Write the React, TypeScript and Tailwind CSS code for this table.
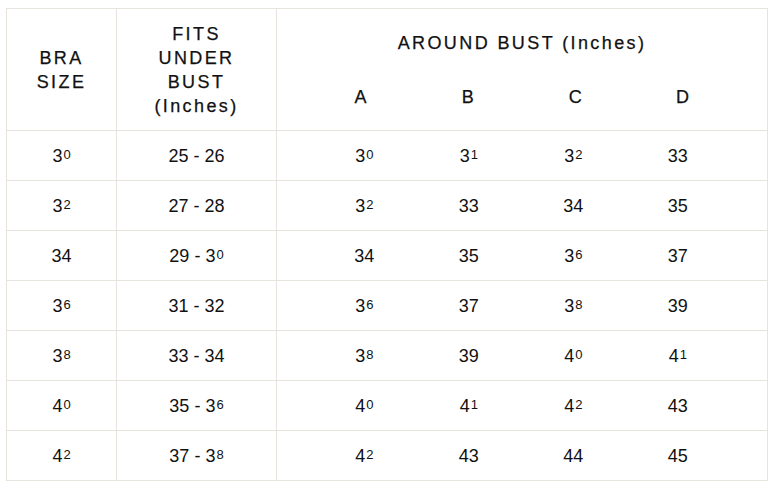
import React from 'react'

// "^" marks a digit that the chart's font draws small and raised
const rows = [
  { size: '3^0', under: '25 - 26', bust: ['3^0', '3^1', '3^2', '33'] },
  { size: '3^2', under: '27 - 28', bust: ['3^2', '33', '34', '35'] },
  { size: '34', under: '29 - 3^0', bust: ['34', '35', '3^6', '37'] },
  { size: '3^6', under: '31 - 32', bust: ['3^6', '37', '3^8', '39'] },
  { size: '3^8', under: '33 - 34', bust: ['3^8', '39', '4^0', '4^1'] },
  { size: '4^0', under: '35 - 3^6', bust: ['4^0', '4^1', '4^2', '43'] },
  { size: '4^2', under: '37 - 3^8', bust: ['4^2', '43', '44', '45'] },
]

const cups = ['A', 'B', 'C', 'D']

function Num({ value }: { value: string }) {
  const parts = value.split('^')
  return (
    <span>
      {parts[0]}
      {parts[1] !== undefined && <span className="ml-px text-[13px] align-[3px]">{parts[1]}</span>}
    </span>
  )
}

export default function App() {
  return (
    <div className="min-h-[489px] w-[776px] bg-white pl-[6px] pt-[8px] text-[#111]">
      <div className="w-[762px] border-l border-t border-[#e6e4dd] font-['Liberation_Sans',Arial,sans-serif]">
        {/* Header */}
        <div className="grid grid-cols-[110px_160px_491px] text-[18px] leading-[24px] tracking-[2.4px] [-webkit-text-stroke:0.25px_#111]">
          <div className="flex h-[122px] items-center justify-center border-b border-r border-[#e6e4dd] text-center">
            BRA
            <br />
            SIZE
          </div>
          <div className="flex h-[122px] items-center justify-center border-b border-r border-[#e6e4dd] text-center">
            FITS
            <br />
            UNDER
            <br />
            BUST
            <br />
            (Inches)
          </div>
          <div className="flex h-[122px] flex-col justify-center border-b border-r border-[#e6e4dd]">
            <div className="text-center">AROUND BUST (Inches)</div>
            <div className="mt-[30px] grid grid-cols-4 pl-[30px] pr-[31px] tracking-normal">
              {cups.map((c) => (
                <div key={c} className="text-center">
                  {c}
                </div>
              ))}
            </div>
          </div>
        </div>

        {/* Rows */}
        {rows.map((r) => (
          <div key={r.size} className="grid grid-cols-[110px_160px_491px] text-[18px] leading-[24px]">
            <div className="flex h-[50px] items-center justify-center border-b border-r border-[#e6e4dd]">
              <Num value={r.size} />
            </div>
            <div className="flex h-[50px] items-center justify-center border-b border-r border-[#e6e4dd]">
              {r.under.split(' - ').map((p, i) => (
                <React.Fragment key={i}>
                  {i > 0 && <span className="whitespace-pre"> - </span>}
                  <Num value={p} />
                </React.Fragment>
              ))}
            </div>
            <div className="grid h-[50px] grid-cols-4 items-center border-b border-r border-[#e6e4dd] pl-[35px] pr-[37px]">
              {r.bust.map((b, i) => (
                <div key={i} className="text-center">
                  <Num value={b} />
                </div>
              ))}
            </div>
          </div>
        ))}
      </div>
    </div>
  )
}
